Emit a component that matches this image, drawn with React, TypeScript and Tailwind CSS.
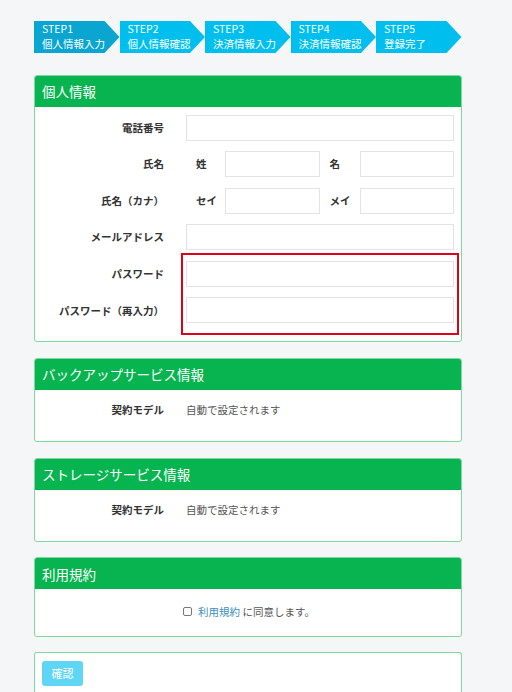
const steps = [
  { no: "STEP1", label: "個人情報入力", active: true },
  { no: "STEP2", label: "個人情報確認", active: false },
  { no: "STEP3", label: "決済情報入力", active: false },
  { no: "STEP4", label: "決済情報確認", active: false },
  { no: "STEP5", label: "登録完了", active: false },
];

const font = { fontFamily: '"Noto Sans CJK JP", "Noto Sans", sans-serif' };

function Panel({ title, children }: { title: string; children: React.ReactNode }) {
  return (
    <div className="mb-[15.3px] rounded-[3px] border border-[#7fd7a2] bg-white">
      <div className="flex h-[31px] items-center rounded-t-[2px] bg-[#07b450] px-[7px] text-[13.5px] text-white">
        {title}
      </div>
      {children}
    </div>
  );
}

function Input() {
  return <div className="h-[26px] border border-[#e3e3e3] bg-white" />;
}

function Row({ label, children }: { label: string; children: React.ReactNode }) {
  return (
    <div className="grid grid-cols-[151px_1fr] items-center">
      <div className="pr-[22px] text-right text-[10.5px] font-bold text-[#333]">{label}</div>
      {children}
    </div>
  );
}

export default function App() {
  return (
    <div className="min-h-[692px] bg-[#f5f6f8] pl-[34px] pt-[21px]" style={font}>
      {/* ステップ */}
      <div className="flex">
        {steps.map((s) => (
          <div
            key={s.no}
            className={`h-[32px] w-[85.5px] pl-[8px] text-[10.5px] leading-[15px] text-white [clip-path:polygon(0_0,calc(100%-15px)_0,100%_50%,calc(100%-15px)_100%,0_100%)] ${
              s.active ? "bg-[#0aa6d1]" : "bg-[#00bfee]"
            }`}
          >
            <div>{s.no}</div>
            <div>{s.label}</div>
          </div>
        ))}
      </div>

      <div className="mt-[21.5px] w-[428px]">
        <Panel title="個人情報">
          <div className="relative flex flex-col gap-[10.6px] pb-[18px] pr-[7px] pt-[8px]">
            <Row label="電話番号">
              <Input />
            </Row>
            <Row label="氏名">
              <div className="grid grid-cols-[39px_1fr_40px_1fr] items-center text-[10.5px] font-bold text-[#333]">
                <span className="pl-[10px]">姓</span>
                <Input />
                <span className="pl-[10px]">名</span>
                <Input />
              </div>
            </Row>
            <Row label="氏名（カナ）">
              <div className="grid grid-cols-[39px_1fr_40px_1fr] items-center text-[10.5px] font-bold text-[#333]">
                <span className="pl-[10px]">セイ</span>
                <Input />
                <span className="pl-[10px]">メイ</span>
                <Input />
              </div>
            </Row>
            <Row label="メールアドレス">
              <Input />
            </Row>
            <Row label="パスワード">
              <Input />
            </Row>
            <Row label="パスワード（再入力）">
              <Input />
            </Row>
            <div className="absolute left-[146px] top-[146px] h-[82px] w-[278px] border-2 border-[#e0001b]" />
          </div>
        </Panel>

        <Panel title="バックアップサービス情報">
          <div className="pb-[23.5px] pt-[12px]">
            <Row label="契約モデル">
              <span className="text-[10.5px] leading-[16px] text-[#555]">自動で設定されます</span>
            </Row>
          </div>
        </Panel>

        <Panel title="ストレージサービス情報">
          <div className="pb-[23.5px] pt-[12px]">
            <Row label="契約モデル">
              <span className="text-[10.5px] leading-[16px] text-[#555]">自動で設定されます</span>
            </Row>
          </div>
        </Panel>

        <Panel title="利用規約">
          <div className="flex h-[46.5px] items-center justify-center gap-[6px] pb-[2px] pl-[2px] text-[10.5px] text-[#555]">
            <span className="h-[9px] w-[9px] rounded-[2px] border border-[#777] bg-white" />
            <span>
              <span className="text-[#3c8dbc]">利用規約</span> に同意します。
            </span>
          </div>
        </Panel>

        <div className="h-[45px] rounded-t-[3px] border border-b-0 border-[#7fd7a2] bg-white pl-[7px] pt-[8px]">
          <div className="flex h-[25px] w-[41px] items-center justify-center rounded-[3px] bg-[#5fd6f5] text-[11px] text-white">
            確認
          </div>
        </div>
      </div>
    </div>
  );
}
